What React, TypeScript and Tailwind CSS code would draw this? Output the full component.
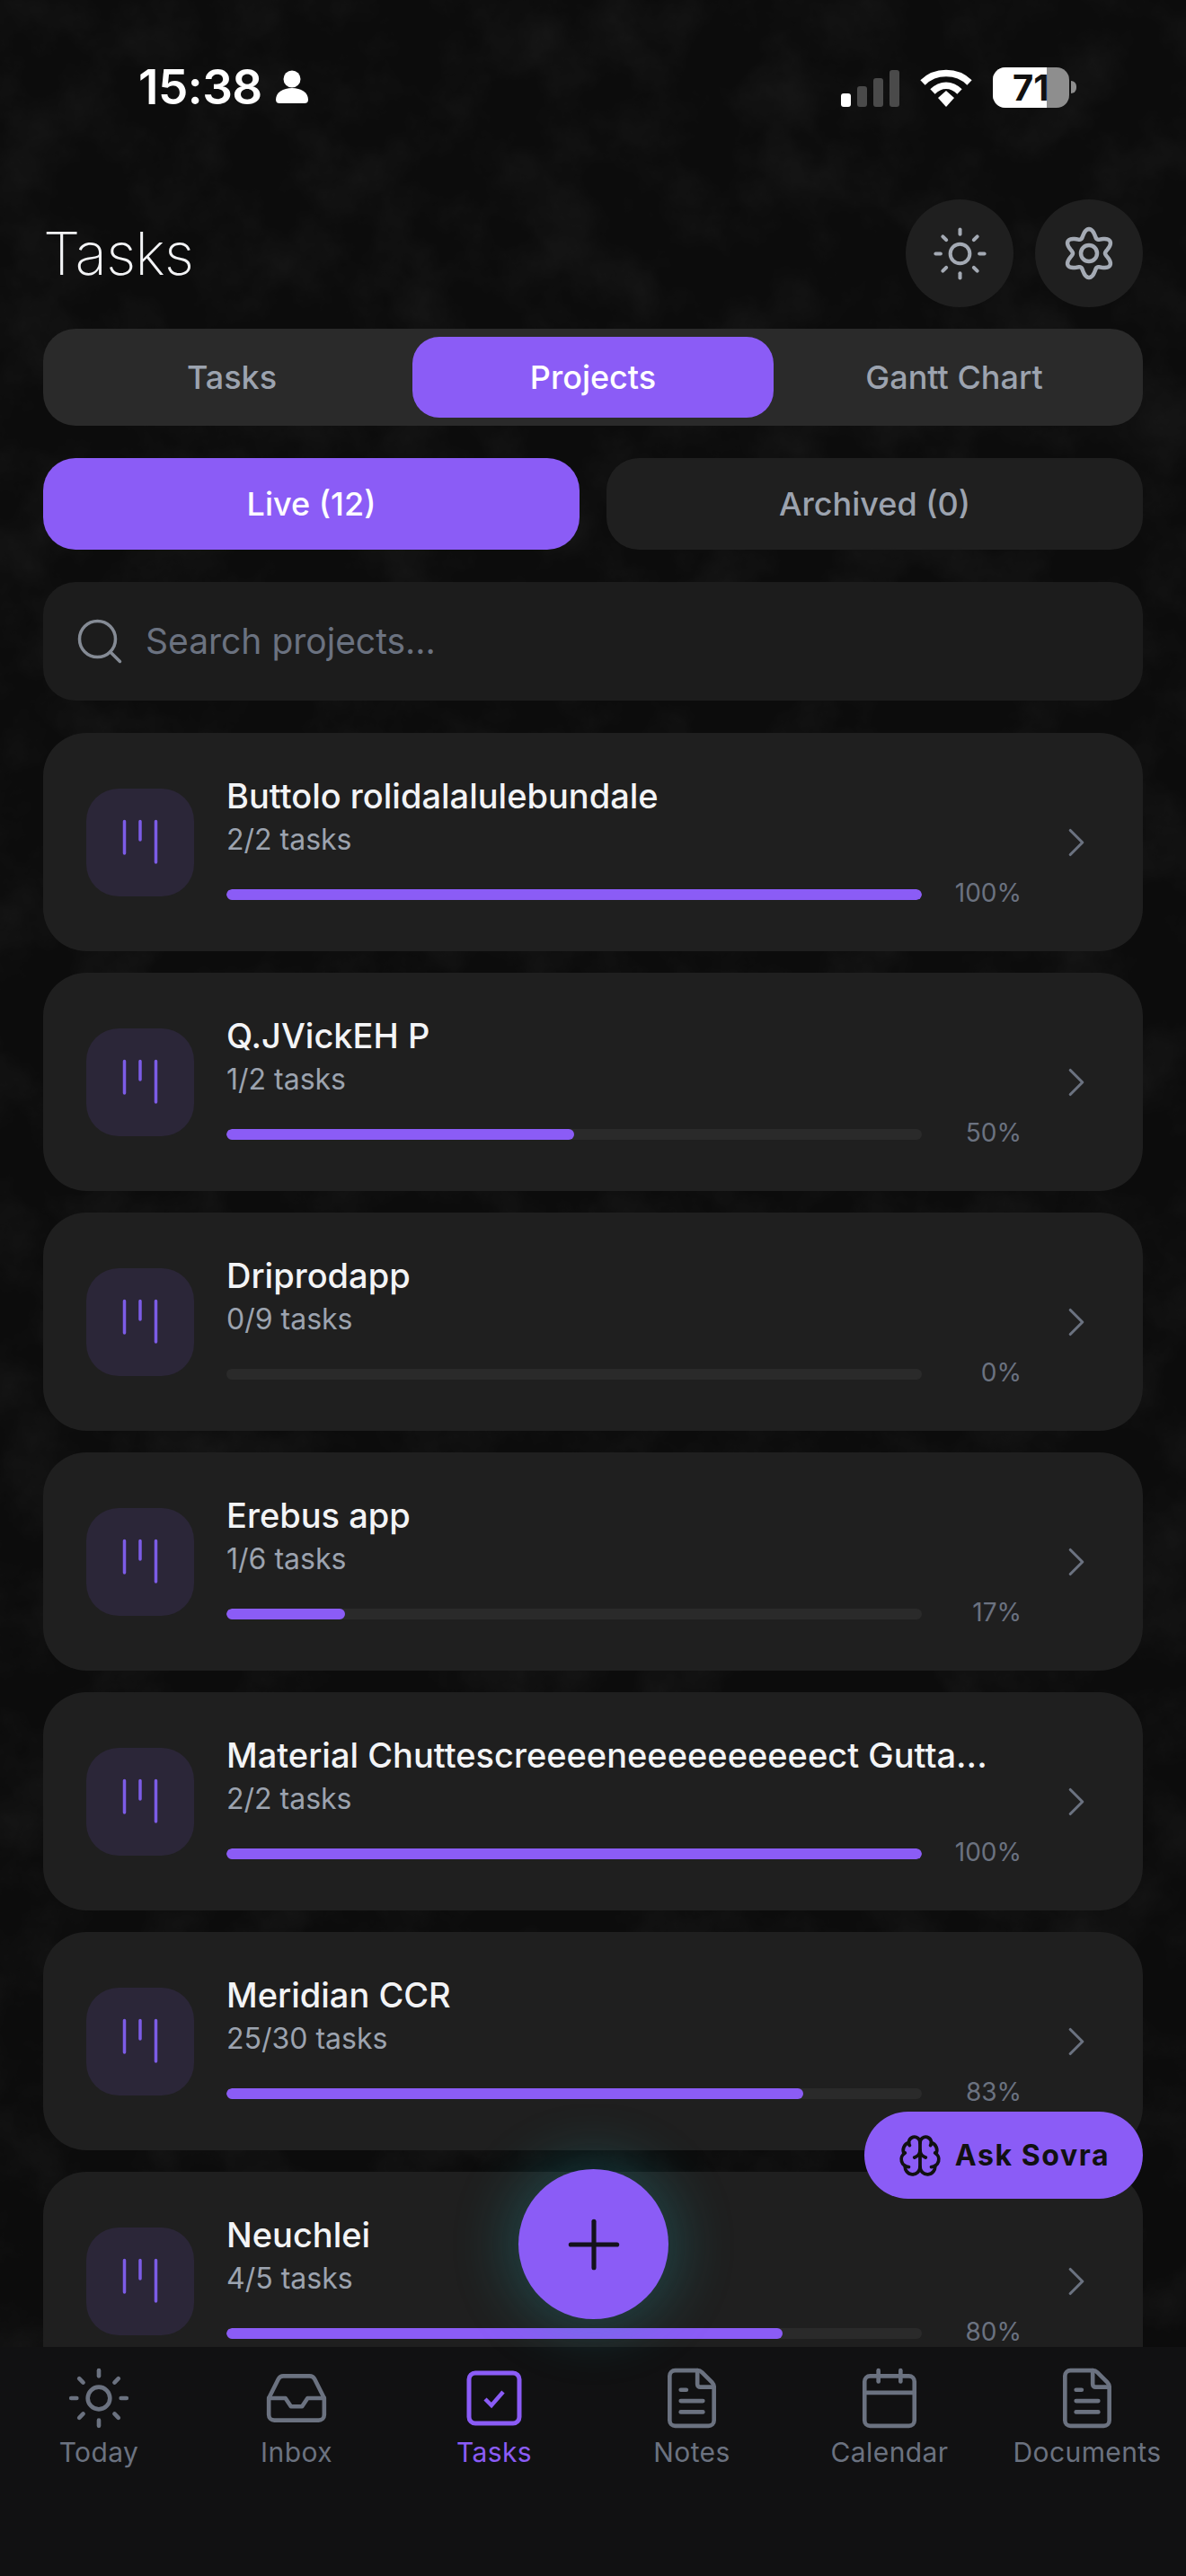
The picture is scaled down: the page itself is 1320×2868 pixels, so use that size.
import { Brain, Calendar, ChevronRight, FileText, Inbox, Plus, Search, Sun } from "lucide-react";

const projects = [
  { name: "Buttolo rolidalalulebundale", done: "2/2 tasks", pct: 100 },
  { name: "Q.JVickEH P", done: "1/2 tasks", pct: 50 },
  { name: "Driprodapp", done: "0/9 tasks", pct: 0 },
  { name: "Erebus app", done: "1/6 tasks", pct: 17 },
  { name: "Material Chuttescreeeeneeeeeeeeeect Gutta...", done: "2/2 tasks", pct: 100 },
  { name: "Meridian CCR", done: "25/30 tasks", pct: 83 },
  { name: "Neuchlei", done: "4/5 tasks", pct: 80 },
];

function gearPath() {
  const pts: string[] = [];
  for (let i = 0; i <= 120; i++) {
    const t = (i / 120) * Math.PI * 2;
    const r = 22.5 + 4.5 * Math.cos(6 * t);
    pts.push(`${(32 + r * Math.sin(t)).toFixed(2)} ${(32 - r * Math.cos(t)).toFixed(2)}`);
  }
  return "M" + pts.join("L") + "Z";
}

function ProjectCard({ name, done, pct }: { name: string; done: string; pct: number }) {
  return (
    <div className="flex h-[243px] shrink-0 items-center rounded-[48px] bg-[#1f1f1f] pl-[48px] pr-[47px]">
      <div className="flex h-[120px] w-[120px] shrink-0 items-center justify-center rounded-[36px] bg-[#2b2638]">
        <svg width="60" height="60" viewBox="0 0 60 60" fill="none" stroke="#7c5ce6" strokeWidth="3.5" strokeLinecap="round">
          <path d="M12.5 6.5V42M30 6.5V27M47.5 6.5V52" />
        </svg>
      </div>
      <div className="ml-[36px] w-[885px] min-w-0">
        <div className="truncate text-[38px] font-medium leading-[48px] text-[#f3f4f6]">{name}</div>
        <div className="pt-[2px] text-[32px] leading-[46px] text-[#9ca3af]">{done}</div>
        <div className="mt-5 flex h-[36px] items-center justify-between">
          <div className="h-[12px] w-[774px] overflow-hidden rounded-full bg-[#2a2a2a]">
            <div className="h-full rounded-full bg-[#8b5cf6]" style={{ width: `${pct}%` }} />
          </div>
          <span className="-mt-1 text-[28px] text-[#6b7280]">{pct}%</span>
        </div>
      </div>
      <ChevronRight size={54} strokeWidth={1.4} className="ml-auto shrink-0 text-[#6b7280]" />
    </div>
  );
}

function NavItem({ label, active, children }: { label: string; active?: boolean; children: React.ReactNode }) {
  return (
    <div className={`flex flex-col items-center ${active ? "text-[#8b5cf6]" : "text-[#6b7280]"}`}>
      <div className="flex h-[80px] w-[80px] items-center justify-center">{children}</div>
      <span className="text-[30px] leading-[40px] tracking-[0.4px]">{label}</span>
    </div>
  );
}

export default function App() {
  return (
    <div className="relative flex h-[2868px] w-[1320px] flex-col overflow-hidden bg-[#0c0c0c] font-[family-name:Inter,sans-serif]">
      {/* dim foliage wallpaper */}
      <svg className="absolute inset-0 h-full w-full" aria-hidden="true">
        <filter id="leaves">
          <feTurbulence type="fractalNoise" baseFrequency="0.012" numOctaves="6" seed="7" />
          <feColorMatrix values="0 0 0 0 1  0 0 0 0 1  0 0 0 0 1  0.3 0 0 0 -0.12" />
        </filter>
        <rect width="100%" height="100%" filter="url(#leaves)" opacity="0.28" />
      </svg>

      {/* status bar */}
      <div className="relative flex h-[222px] shrink-0 items-start justify-between pl-[154px] pr-[122px] pt-[70px] text-white">
        <div className="flex items-center">
          <span className="text-[53px] font-semibold leading-[54px] tracking-[-0.5px]">15:38</span>
          <svg width="36" height="38" viewBox="0 0 36 38" fill="white" className="ml-[15px]">
            <circle cx="18" cy="10" r="9.5" />
            <path d="M0 33c0-8 8-13 18-13s18 5 18 13c0 3-2 4-4 4H4c-2 0-4-1-4-4z" />
          </svg>
        </div>
        <div className="mt-[5px] flex items-end">
          <div className="mb-[1px] flex items-end gap-[7px]">
            <div className="h-[15px] w-[11px] rounded-[3px] bg-white" />
            <div className="h-[23px] w-[11px] rounded-[3px] bg-[#4a4a4a]" />
            <div className="h-[32px] w-[11px] rounded-[3px] bg-[#4a4a4a]" />
            <div className="h-[41px] w-[11px] rounded-[3px] bg-[#4a4a4a]" />
          </div>
          <svg width="58" height="43" viewBox="0 0 58 43" fill="none" stroke="white" strokeWidth="7.5" className="ml-[23px]">
            <path d="M3 15C17 1 41 1 55 15" />
            <path d="M14 25C23 16 35 16 44 25" />
            <path d="M20 32l9-8 9 8-9 10z" fill="white" stroke="none" />
          </svg>
          <div className="relative ml-[23px] flex h-[45px] w-[85px] rounded-[14px] bg-[#8e8e8e]">
            <div className="w-[60px] rounded-l-[14px] bg-white" />
            <span className="absolute left-[22px] top-0 text-[40px] font-bold leading-[45px] text-[#111]">71</span>
          </div>
          <div className="mb-[16px] ml-[2px] h-[14px] w-[6px] rounded-r-full bg-[#8e8e8e]" />
        </div>
      </div>

      <div className="relative flex min-h-0 flex-1 flex-col overflow-hidden px-[48px]">
        {/* title row */}
        <div className="flex h-[120px] shrink-0 items-center justify-between">
          <h1 className="text-[66px] font-extralight tracking-[-1px] text-[#f3f4f6]">Tasks</h1>
          <div className="flex gap-[24px]">
            <div className="flex h-[120px] w-[120px] items-center justify-center rounded-full bg-[#1f1f1f]">
              <Sun size={65} strokeWidth={1.5} className="text-[#a4aab4]" />
            </div>
            <div className="flex h-[120px] w-[120px] items-center justify-center rounded-full bg-[#1f1f1f]">
              <svg width="64" height="64" viewBox="0 0 64 64" fill="none" stroke="#a4aab4" strokeWidth="4.5" strokeLinejoin="round">
                <path d={gearPath()} />
                <circle cx="32" cy="32" r="9" />
              </svg>
            </div>
          </div>
        </div>

        {/* view switcher */}
        <div className="mt-[24px] grid h-[108px] shrink-0 grid-cols-3 gap-0 rounded-[36px] bg-[#2a2a2a] p-[9px] text-[36px] font-medium text-[#9ca3af]">
          <div className="flex items-center justify-center">Tasks</div>
          <div className="flex items-center justify-center rounded-[30px] bg-[#8b5cf6] text-white">Projects</div>
          <div className="flex items-center justify-center">Gantt Chart</div>
        </div>

        <div className="mt-[36px] grid h-[102px] shrink-0 grid-cols-2 gap-[30px] text-[36px] font-medium">
          <div className="flex items-center justify-center rounded-[36px] bg-[#8b5cf6] text-white">Live (12)</div>
          <div className="flex items-center justify-center rounded-[36px] bg-[#1f1f1f] text-[#9ca3af]">Archived (0)</div>
        </div>

        <div className="mt-[36px] flex h-[132px] shrink-0 items-center rounded-[36px] bg-[#1c1c1c] pl-[33px]">
          <Search size={60} strokeWidth={1.4} className="text-[#858b95]" />
          <span className="ml-[21px] text-[39px] text-[#6b7280]">Search projects...</span>
        </div>

        <div className="mt-[36px] flex flex-col gap-[24px]">
          {projects.map((p) => (
            <ProjectCard key={p.name} {...p} />
          ))}
        </div>
      </div>

      {/* bottom nav */}
      <nav className="relative grid h-[255px] shrink-0 grid-cols-6 bg-[#111112] pt-[17px]">
        <NavItem label="Today">
          <Sun size={74} strokeWidth={1.5} />
        </NavItem>
        <NavItem label="Inbox">
          <Inbox size={74} strokeWidth={1.5} />
        </NavItem>
        <NavItem label="Tasks" active>
          <svg width="80" height="80" viewBox="0 0 80 80" fill="none" stroke="currentColor">
            <rect x="12" y="12" width="56" height="56" rx="7" strokeWidth="5" />
            <path d="M30 41l7 7 13-15" strokeWidth="4.5" />
          </svg>
        </NavItem>
        <NavItem label="Notes">
          <FileText size={74} strokeWidth={1.5} />
        </NavItem>
        <NavItem label="Calendar">
          <Calendar size={74} strokeWidth={1.5} />
        </NavItem>
        <NavItem label="Documents">
          <FileText size={74} strokeWidth={1.5} />
        </NavItem>
      </nav>

      {/* floating actions */}
      <div className="absolute left-[962px] top-[2351px] flex h-[97px] w-[310px] items-center justify-center gap-[14px] rounded-full bg-[#8b5cf6] text-[#111]">
        <Brain size={50} strokeWidth={1.8} />
        <span className="text-[32px] font-bold tracking-[1.6px]">Ask Sovra</span>
      </div>
      <div className="absolute left-[577px] top-[2415px] flex h-[167px] w-[167px] items-center justify-center rounded-full bg-[#8b5cf6] text-[#14121c] shadow-[0_0_60px_14px_rgba(34,170,180,0.25)]">
        <Plus size={88} strokeWidth={1.4} />
      </div>
    </div>
  );
}
